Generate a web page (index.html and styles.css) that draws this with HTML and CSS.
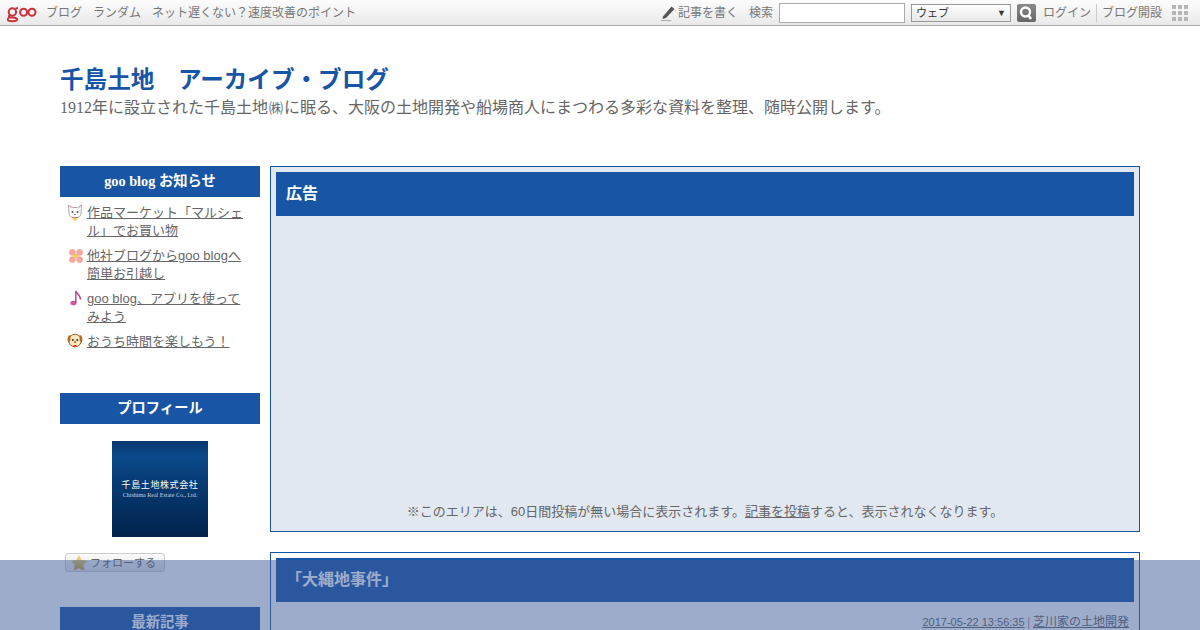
FILE: index.html
```html
<!DOCTYPE html>
<html lang="ja">
<head>
<meta charset="utf-8">
<title>千島土地 アーカイブ・ブログ</title>
<link rel="stylesheet" href="styles.css">
</head>
<body>
<header class="topbar">
  <div class="topbar-left">
    <svg class="goo-logo" width="30" height="17" viewBox="0 0 30 17" role="img" aria-label="goo">
      <g fill="none" stroke="#c9303a" stroke-width="2">
        <circle cx="5.4" cy="6" r="3.7"/>
        <path d="M2.9 9.2 C.9 10.5 2.4 11.6 5.4 11.6 C9.9 11.6 10.4 13 9.9 14 C9 15.6 1.8 15.6 .8 14 C.4 13.2 1 12.4 2 12"/>
        <path d="M8.4 2.6 L11 2"/>
        <circle cx="16.6" cy="6.3" r="3.5"/>
        <circle cx="25" cy="6.3" r="3.5"/>
      </g>
    </svg>
    <a>ブログ</a>
    <a>ランダム</a>
    <a>ネット遅くない？速度改善のポイント</a>
  </div>
  <div class="topbar-right">
    <svg class="pen" width="16" height="16" viewBox="0 0 16 16"><path d="M3 11.5 L11.5 1.5 L14.5 4 L6 13 L2.5 14 Z" fill="#555"/><path d="M1 15.5 H11" stroke="#aaa" stroke-width="1"/></svg>
    <a class="write">記事を書く</a>
    <span class="search-label">検索</span>
    <span class="search-input"></span>
    <span class="search-select"><span>ウェブ</span><i>▼</i></span>
    <span class="search-btn"><svg width="18" height="18" viewBox="0 0 18 18"><circle cx="8.5" cy="8" r="4.5" fill="none" stroke="#fff" stroke-width="2.4"/><path d="M11.5 11.5 L14 15" stroke="#fff" stroke-width="2.6"/></svg></span>
    <a class="login">ログイン</a>
    <a class="open">ブログ開設</a>
    <span class="grid-icon"><i></i><i></i><i></i><i></i><i></i><i></i><i></i><i></i><i></i></span>
  </div>
</header>

<div class="wrap">
  <div class="blog-head">
    <h1>千島土地　アーカイブ・ブログ</h1>
    <p>1912年に設立された千島土地<span class="kabu">㈱</span>に眠る、大阪の土地開発や船場商人にまつわる多彩な資料を整理、随時公開します。</p>
  </div>

  <div class="columns">
    <aside class="side">
      <section class="side-box news">
        <h2>goo blog お知らせ</h2>
        <ul>
          <li><svg class="emoji" width="16" height="17" viewBox="0 0 16 17"><path d="M2 9 L1.5 1 L5.5 3.5 H10.5 L14.5 1 L14 9 C14 12.5 11 14 8 14 C5 14 2 12.5 2 9 Z" fill="#fff" stroke="#b3a6a6"/><path d="M2.6 2.6 L4.2 4 M13.4 2.6 L11.8 4" stroke="#f2b5c5"/><circle cx="5.5" cy="8" r="1" fill="#555"/><circle cx="10.5" cy="8" r="1" fill="#555"/><path d="M7 10.5 H9" stroke="#dd6b7b"/><path d="M5 13.5 H11" stroke="#c45a9b"/><circle cx="8" cy="15" r="1.8" fill="#f2c93a"/></svg><a>作品マーケット「マルシェル」でお買い物</a></li>
          <li><svg class="emoji emoji-flower" width="14" height="14" viewBox="0 0 14 14"><g fill="#f5a9a0" stroke="#f08f8a" stroke-width=".5"><rect x=".5" y=".5" width="5.8" height="5.8" rx="2.4"/><rect x="7.7" y=".5" width="5.8" height="5.8" rx="2.4"/><rect x=".5" y="7.7" width="5.8" height="5.8" rx="2.4"/><rect x="7.7" y="7.7" width="5.8" height="5.8" rx="2.4"/></g><circle cx="7" cy="7" r="2.2" fill="#f7c948"/></svg><a>他社ブログからgoo blogへ簡単お引越し</a></li>
          <li><svg class="emoji emoji-note" width="12" height="16" viewBox="0 0 12 16"><ellipse cx="3.4" cy="13" rx="3" ry="2.3" fill="#d9559f"/><path d="M5.8 13 V1 C7 4 11 6 10.5 9.5" fill="none" stroke="#b83f8c" stroke-width="1.4"/></svg><a>goo blog、アプリを使ってみよう</a></li>
          <li><svg class="emoji emoji-dog" width="16" height="16" viewBox="0 0 16 16"><circle cx="8" cy="7.5" r="6.3" fill="#fbe6c2" stroke="#a5611e"/><path d="M3.5 2 C1 2 .2 5 .8 8.5 C1.5 9.8 3 9 3.4 7 Z M12.5 2 C15 2 15.8 5 15.2 8.5 C14.5 9.8 13 9 12.6 7 Z" fill="#b8691f"/><circle cx="5.8" cy="7" r="1" fill="#333"/><circle cx="10.2" cy="7" r="1" fill="#333"/><ellipse cx="8" cy="9" rx="1" ry=".8" fill="#5a2d10"/><path d="M6 12 Q8 15.5 10 12 Z" fill="#c9301f"/></svg><a>おうち時間を楽しもう！</a></li>
        </ul>
      </section>

      <section class="side-box profile">
        <h2>プロフィール</h2>
        <div class="avatar-row">
          <div class="avatar">
            <strong>千島土地株式会社</strong>
            <small>Chishima Real Estate Co., Ltd.</small>
          </div>
        </div>
        <span class="follow"><svg width="16" height="16" viewBox="0 0 16 16"><defs><linearGradient id="star" x1="0" y1="0" x2="0" y2="1"><stop offset="0" stop-color="#efd98a"/><stop offset="1" stop-color="#c7a836"/></linearGradient></defs><path d="M8 1 L10.2 5.6 L15 6.3 L11.7 9.8 L12.6 14.6 L8 12.4 L3.4 14.6 L4.3 9.8 L1 6.3 L5.8 5.6 Z" fill="url(#star)" stroke="url(#star)" stroke-width="1.2" stroke-linejoin="round"/></svg>フォローする</span>
      </section>

      <section class="side-box latest">
        <h2>最新記事</h2>
      </section>
    </aside>

    <main class="main">
      <section class="panel ad">
        <h2>広告</h2>
        <p>※このエリアは、60日間投稿が無い場合に表示されます。<a>記事を投稿</a>すると、表示されなくなります。</p>
      </section>
      <article class="panel entry">
        <h2>「大縄地事件」</h2>
        <p class="meta"><a class="date">2017-05-22 13:56:35</a> | <a>芝川家の土地開発</a></p>
      </article>
    </main>
  </div>
</div>

<div class="overlay"></div>
</body>
</html>
```

FILE: styles.css
```css
* { box-sizing: border-box; }
html, body { margin: 0; height: 630px; overflow: hidden; }
body {
  background: #fff;
  color: #666;
  font-family: "Liberation Serif", "Noto Sans CJK JP", serif;
  font-size: 13px;
  line-height: 18px;
}
a { color: inherit; }

.topbar {
  height: 26px;
  display: flex;
  justify-content: space-between;
  align-items: center;
  background: linear-gradient(#fdfdfd, #e9e9e9);
  border-bottom: 1px solid #aaa;
  font-family: "Liberation Sans", "Noto Sans CJK JP", sans-serif;
  font-size: 12px;
  color: #777;
}
.topbar-left, .topbar-right { display: flex; align-items: center; }
.topbar-left { padding-left: 7px; gap: 11px; }
.goo-logo { margin: 3px -2px 0 0; flex: none; }
.pen { margin-right: 2px; }
.write { margin-right: 11px; }
.search-label { margin-right: 6px; }
.search-input {
  width: 126px; height: 20px;
  background: #fff;
  border: 1px solid #aaa;
  margin-right: 6px;
}
.search-select {
  width: 100px; height: 18px;
  display: flex; justify-content: space-between; align-items: center;
  padding: 0 4px;
  background: linear-gradient(#fff, #e8e8e8);
  border: 1px solid #999;
  color: #333;
  font-size: 11px;
  margin-right: 6px;
}
.search-select i { font-style: normal; font-size: 9px; }
.search-btn {
  width: 19px; height: 18px;
  display: flex; align-items: center; justify-content: center;
  background: linear-gradient(#8a8a8a, #666);
  border-radius: 2px;
  margin-right: 7px;
}
.login { padding-right: 5px; border-right: 1px solid #ccc; margin-right: 5px; }
.grid-icon {
  display: grid;
  grid-template-columns: repeat(3, 4px);
  grid-auto-rows: 4px;
  gap: 2px;
  margin: 0 12px 0 10px;
}
.grid-icon i { background: #b5b5b5; }

.wrap { padding: 0 60px; }
.blog-head { padding-top: 39px; height: 140px; }
.blog-head h1 {
  margin: 0;
  color: #1855a5;
  font-size: 23.6px;
  line-height: 30px;
  font-weight: bold;
}
.blog-head p { margin: 0; font-size: 16px; line-height: 26px; }
.kabu { display: inline-block; width: 16px; text-align: center; font-size: 14px; }

.columns { display: flex; gap: 10px; align-items: flex-start; }
.side { width: 200px; flex: none; }
.side-box h2 {
  margin: 0;
  background: #1855a5;
  color: #fff;
  text-align: center;
  font-size: 14.3px;
  line-height: 31px;
  font-weight: bold;
}
.news { height: 227px; }
.news ul { list-style: none; margin: 0; padding: 7px 0 0; font-family: "Liberation Sans", "Noto Sans CJK JP", sans-serif; }
.news li { position: relative; padding: 0 15px 0 27px; margin-bottom: 7px; }
.news a { text-decoration: underline; }
.emoji { position: absolute; left: 7px; top: 0; }
.emoji-flower { left: 9px; top: 2px; }
.emoji-note { left: 10px; top: 0; }
.emoji-dog { top: 0; }
.profile { height: 214px; }
.avatar-row { display: flex; justify-content: center; padding-top: 17px; }
.avatar {
  width: 96px; height: 96px;
  display: flex; flex-direction: column; align-items: center; justify-content: center;
  background: linear-gradient(#06366f, #0a4a8a 15%, #06386f 50%, #02234c);
  color: #fff;
}
.avatar strong { font-size: 9px; line-height: 12px; font-weight: normal; letter-spacing: .6px; }
.avatar small { font-size: 6px; line-height: 9px; color: #c6d2e0; white-space: nowrap; }
.follow {
  display: inline-flex; align-items: center; gap: 3px;
  margin: 16px 0 0 5px;
  width: 100px; height: 19px;
  padding-left: 5px;
  background: linear-gradient(#fafafa, #e8e8e8);
  border: 1px solid #ccc;
  border-radius: 3px;
  font-family: "Liberation Sans", "Noto Sans CJK JP", sans-serif;
  font-size: 11px;
  color: #666;
}

.main { width: 870px; flex: none; }
.panel {
  border: 1px solid #1855a5;
  padding: 5px;
}
.panel h2 {
  margin: 0;
  height: 44px;
  padding: 0 10px;
  background: #1855a5;
  color: #fff;
  font-size: 16px;
  line-height: 44px;
  font-weight: bold;
}
.ad {
  height: 366px;
  background: #e1e8f0;
  margin-bottom: 20px;
  display: flex; flex-direction: column; justify-content: space-between;
}
.ad p {
  margin: 0 0 4px;
  text-align: center;
  font-family: "Liberation Sans", "Noto Sans CJK JP", sans-serif;
  font-size: 13px;
  line-height: 20px;
}
.ad a { text-decoration: underline; }
.meta { margin: 11px 5px 0 0; text-align: right; font-size: 12px; }
.meta a { text-decoration: underline; }
.date { font-family: "Liberation Sans", sans-serif; font-size: 11px; }

.overlay {
  position: fixed;
  left: 0; right: 0; bottom: 0;
  height: 70px;
  background: rgba(59, 89, 152, .5);
}
```
